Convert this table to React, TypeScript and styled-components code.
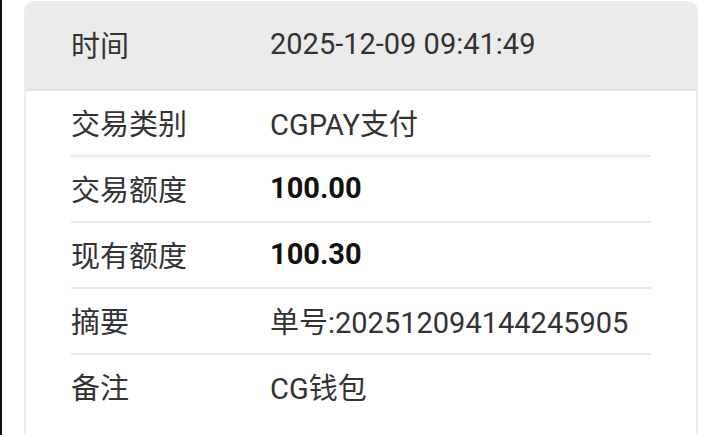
import * as React from 'react'
import styled, { createGlobalStyle } from 'styled-components'

const GlobalStyle = createGlobalStyle`
  html, body {
    margin: 0;
    padding: 0;
    background: #ffffff;
    overflow: hidden;
  }
  body {
    font-family: 'Roboto', 'Noto Sans CJK SC', sans-serif;
  }
`

const Page = styled.div`
  display: flex;
  height: 435px;
  background: #ffffff;
`

const Bezel = styled.div`
  width: 2px;
  flex-shrink: 0;
  background: #111;
`

const Card = styled.div`
  margin: 1px 0 0 22px;
  width: 674px;
  box-sizing: border-box;
  border: 2px solid #ececec;
  border-bottom: none;
  border-radius: 10px 10px 0 0;
  overflow: hidden;
  background: #fff;
`

const Header = styled.div`
  display: flex;
  align-items: center;
  height: 88px;
  padding: 0 45px 4px;
  box-sizing: border-box;
  background: #ebebeb;
  border-bottom: 2px solid #e3e3e3;
`

const List = styled.div`
  padding: 0 45px;
`

const Row = styled.div<{ first?: boolean }>`
  display: flex;
  align-items: center;
  padding-bottom: 2px;
  box-sizing: border-box;
  border-top: ${(p) => (p.first ? 'none' : '2px solid #e8e8e8')};
  height: ${(p) => (p.first ? 64 : 66)}px;
`

const Label = styled.div`
  width: 199px;
  flex-shrink: 0;
  font-size: 29px;
  color: #333;
`

const Value = styled.div<{ bold?: boolean }>`
  font-size: 29px;
  color: ${(p) => (p.bold ? '#111' : '#333')};
  font-weight: ${(p) => (p.bold ? 700 : 400)};
`

const rows = [
  { label: '交易类别', value: 'CGPAY支付' },
  { label: '交易额度', value: '100.00', bold: true },
  { label: '现有额度', value: '100.30', bold: true },
  { label: '摘要', value: '单号:202512094144245905' },
  { label: '备注', value: 'CG钱包' },
]

export default function App() {
  return (
    <Page>
      <GlobalStyle />
      <Bezel />
      <Card>
        <Header>
          <Label>时间</Label>
          <Value>2025-12-09 09:41:49</Value>
        </Header>
        <List>
          {rows.map((r, i) => (
            <Row key={r.label} first={i === 0}>
              <Label>{r.label}</Label>
              <Value bold={r.bold}>{r.value}</Value>
            </Row>
          ))}
        </List>
      </Card>
    </Page>
  )
}
